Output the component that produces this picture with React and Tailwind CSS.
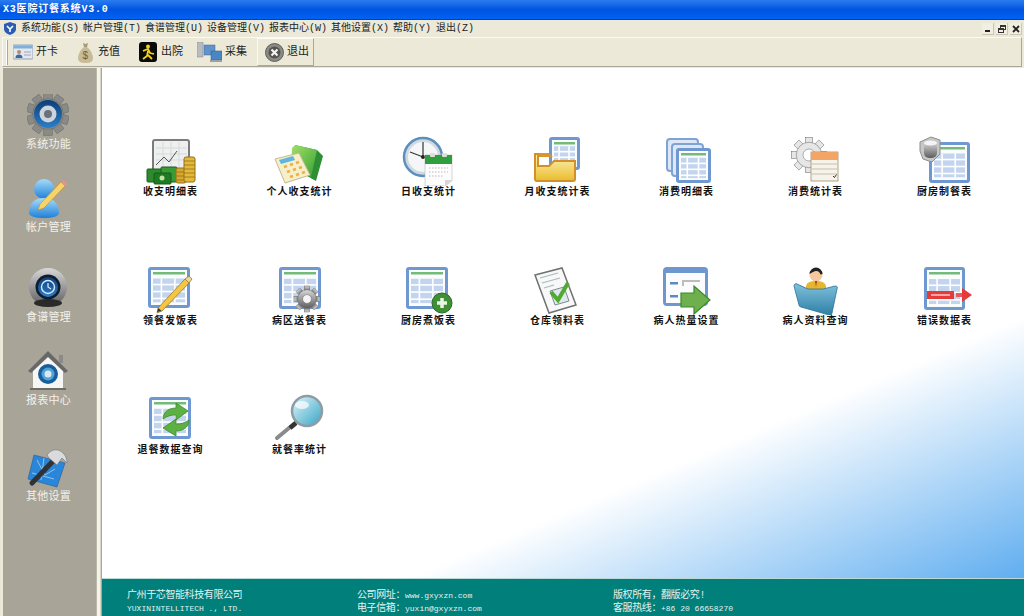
import React from "react";

const cjk = "font-['Liberation_Mono','Noto_Sans_CJK_SC',monospace]";

// shared gradients, referenced by id from the icons below
function Defs() {
  return (
    <svg className="absolute w-0 h-0">
      <defs>
        <linearGradient id="steel" x1="0" y1="0" x2="0" y2="1">
          <stop offset="0" stopColor="#d8d8d8" />
          <stop offset="1" stopColor="#5d5d5d" />
        </linearGradient>
        <linearGradient id="blueBall" x1="0" y1="0" x2="0" y2="1">
          <stop offset="0" stopColor="#a5dcfb" />
          <stop offset="1" stopColor="#1f80d8" />
        </linearGradient>
        <linearGradient id="navy" x1="0" y1="0" x2="0" y2="1">
          <stop offset="0" stopColor="#0d3d78" />
          <stop offset="1" stopColor="#2c7fc8" />
        </linearGradient>
        <linearGradient id="folderY" x1="0" y1="0" x2="0" y2="1">
          <stop offset="0" stopColor="#fff2b8" />
          <stop offset="1" stopColor="#e8bd2c" />
        </linearGradient>
        <linearGradient id="folderB" x1="0" y1="0" x2="0" y2="1">
          <stop offset="0" stopColor="#7fc1dc" />
          <stop offset="1" stopColor="#2f7fa6" />
        </linearGradient>
        <linearGradient id="greenF" x1="0" y1="0" x2="1" y2="1">
          <stop offset="0" stopColor="#a4e06a" />
          <stop offset="1" stopColor="#35a132" />
        </linearGradient>
        <linearGradient id="lens" x1="0" y1="0" x2="1" y2="1">
          <stop offset="0" stopColor="#e4f7fb" />
          <stop offset="1" stopColor="#34a4c4" />
        </linearGradient>
      </defs>
    </svg>
  );
}

// little table sheet that most of the report icons start from
function Sheet({ x = 7, y = 3, w = 38, h = 40 }) {
  const rows = [0.36, 0.53, 0.7];
  const cols = [0.3, 0.62];
  return (
    <g>
      <rect x={x} y={y} width={w} height={h} rx="3" fill="#6f98d0" />
      <rect x={x + 3} y={y + 3} width={w - 6} height={h - 6} fill="#fbfcfe" />
      <rect x={x + 5} y={y + 5} width={w - 10} height="2.5" fill="#74ba78" />
      <rect x={x + 5} y={y + h * 0.28} width={w - 10} height={h * 0.58} fill="#c3d5ee" />
      {rows.map((r) => (
        <rect key={r} x={x + 5} y={y + h * r + 2} width={w - 10} height="1.6" fill="#fff" />
      ))}
      {cols.map((c) => (
        <rect key={c} x={x + w * c} y={y + h * 0.28} width="1.6" height={h * 0.58} fill="#fff" />
      ))}
    </g>
  );
}

function Gear({ cx, cy, r, fill = "url(#steel)", hole = "#fff", teeth = 8 }) {
  const list = [];
  for (let i = 0; i < teeth; i++) list.push((i * 360) / teeth);
  return (
    <g>
      {list.map((a) => (
        <rect
          key={a}
          x={cx - r * 0.24}
          y={cy - r * 1.18}
          width={r * 0.48}
          height={r * 0.5}
          fill={fill}
          stroke="#666"
          strokeWidth="0.5"
          transform={`rotate(${a} ${cx} ${cy})`}
        />
      ))}
      <circle cx={cx} cy={cy} r={r * 0.85} fill={fill} stroke="#666" strokeWidth="0.5" />
      <circle cx={cx} cy={cy} r={r * 0.4} fill={hole} stroke="#666" strokeWidth="0.5" />
    </g>
  );
}

const Svg = ({ children, w = 56, h = 50 }) => (
  <svg width={w} height={h} viewBox={`0 0 ${w} ${h}`} className="block">
    {children}
  </svg>
);

/* ---------- main grid icons ---------- */
const icons = {
  money: (
    <Svg>
      <rect x="10" y="4" width="36" height="34" rx="2" fill="#eef0ef" stroke="#7c7c7c" strokeWidth="2" />
      <path d="M13 12h31M13 18h31M13 24h31M20 6v30M28 6v30M36 6v30" stroke="#d5d9d9" strokeWidth="1" />
      <path d="M13 29l8-8 5 5 8-11" stroke="#555" strokeWidth="1" fill="none" />
      <rect x="4" y="33" width="17" height="13" rx="1" fill="#2e8b2d" stroke="#1d5f1e" />
      <rect x="18" y="31" width="16" height="15" rx="1" fill="#3a9a35" stroke="#1d5f1e" />
      <rect x="11" y="37" width="17" height="11" rx="1" fill="#1f7a24" stroke="#175a1a" />
      <circle cx="19" cy="42" r="2.5" fill="#bfe3a0" />
      <rect x="33" y="32" width="10" height="15" rx="2" fill="#d6a92c" stroke="#94701a" />
      <rect x="41" y="21" width="11" height="25" rx="2" fill="#e2b93a" stroke="#94701a" />
      <path d="M41 25h11M41 29h11M41 33h11M41 37h11M41 41h11M33 36h8M33 40h8M33 44h8" stroke="#94701a" strokeWidth="0.8" />
    </Svg>
  ),
  calc: (
    <Svg>
      <path d="M23 9l22 5 6 6-7 25-9-5z" fill="#2c8f33" />
      <path d="M20 12l3-3 22 5-6 27-20-7z" fill="url(#greenF)" />
      <path d="M3 23l24-6 11 22-25 8z" fill="#f7eeca" stroke="#c4b98d" strokeWidth="1" />
      <path d="M7 24l14-4 2 4-14 4z" fill="#5fb8dc" />
      <path d="M12 31l3-1M18 29l3-1M24 27l3-1M15 36l3-1M21 34l3-1M27 32l3-1M18 41l3-1M24 39l3-1M30 37l3-1" stroke="#eab24a" strokeWidth="2.5" />
    </Svg>
  ),
  clock: (
    <Svg>
      <circle cx="22" cy="21" r="19" fill="#cfd9e2" stroke="#5d8fbd" strokeWidth="2.5" />
      <circle cx="22" cy="21" r="15" fill="#f4f6f8" />
      <path d="M22 6v15l-13-5M22 21l11 2" stroke="#333" strokeWidth="1.2" fill="none" />
      <circle cx="22" cy="21" r="2" fill="#222" />
      <path d="M24 19h27v26l-7 5H24z" fill="#fdfdfd" stroke="#bbb" strokeWidth="0.6" />
      <rect x="24" y="19" width="27" height="9" fill="#2f9e3d" />
      <rect x="29" y="17" width="5" height="4" rx="1" fill="#ddd" />
      <rect x="41" y="17" width="5" height="4" rx="1" fill="#ddd" />
      <path d="M28 32h19M28 36h19M28 40h15" stroke="#bbb" strokeWidth="1" strokeDasharray="1.5 1.5" />
      <path d="M44 50v-6h7z" fill="#d5d5d5" />
    </Svg>
  ),
  folderSheet: (
    <Svg>
      <Sheet x={19} y={1} w={31} h={33} />
      <path d="M5 17h14l4 4H5z" fill="#d9962e" />
      <path d="M5 18v25a2 2 0 002 2h36a2 2 0 002-2V25H24l-5 5H8V18z" fill="url(#folderY)" stroke="#d1902a" strokeWidth="2" />
    </Svg>
  ),
  stack: (
    <Svg>
      <rect x="8" y="3" width="31" height="32" rx="3" fill="#dde7f5" stroke="#7fa3d5" strokeWidth="2" />
      <rect x="13" y="8" width="31" height="32" rx="3" fill="#dde7f5" stroke="#7fa3d5" strokeWidth="2" />
      <Sheet x={17} y={12} w={35} h={35} />
    </Svg>
  ),
  gearList: (
    <Svg>
      <Gear cx={21} cy={19} r={15} fill="#e6e6e6" hole="#fff" />
      <rect x="23" y="16" width="27" height="29" fill="#f6f3ea" stroke="#a08d68" strokeWidth="0.8" />
      <rect x="23" y="16" width="27" height="8" fill="#f2a565" />
      <path d="M24 28h25M24 33h25M24 38h25" stroke="#c6bfae" strokeWidth="1" />
      <path d="M45 40l1.5 1.5 2-3" stroke="#333" strokeWidth="1" fill="none" />
    </Svg>
  ),
  dbSheet: (
    <Svg>
      <Sheet x={12} y={6} w={41} h={41} />
      <path d="M14 1l9 3v14l-8 8-9-3-3-8V6z" fill="#c7c7c7" stroke="#8d8d8d" strokeWidth="1" />
      <rect x="7" y="6" width="13" height="16" rx="5" fill="url(#steel)" />
      <ellipse cx="13.5" cy="7" rx="6.5" ry="2.5" fill="#f4f4f4" />
    </Svg>
  ),
  pencil: (
    <Svg>
      <Sheet x={5} y={2} w={42} h={41} />
      <path d="M15 43l-1 5 5-2 27-28-4-4z" fill="#f4c644" stroke="#9a7a1f" strokeWidth="0.8" />
      <path d="M42 14l4 4 3-4-3-3z" fill="#ecd9a0" stroke="#9a7a1f" strokeWidth="0.8" />
      <path d="M14 47l1.5-4 3 3z" fill="#333" />
    </Svg>
  ),
  sheetGear: (
    <Svg>
      <Sheet x={7} y={2} w={42} h={42} />
      <Gear cx={35} cy={34} r={11} hole="#f4f4f4" />
    </Svg>
  ),
  sheetPlus: (
    <Svg>
      <Sheet x={5} y={2} w={42} h={42} />
      <circle cx="41" cy="38" r="10" fill="#3f8f35" stroke="#2a6a24" />
      <path d="M41 33v10M36 38h10" stroke="#e9f6e2" strokeWidth="3.5" />
    </Svg>
  ),
  check: (
    <Svg>
      <path d="M5 10l27-7 14 37-27 8z" fill="#f7f8f7" stroke="#6e7272" strokeWidth="1.5" />
      <path d="M10 13l18-5M12 18l18-5M14 23l10-3" stroke="#a9b9c4" strokeWidth="1.2" />
      <path d="M20 26l14-4 5 14-14 4z" fill="#dfe8ec" stroke="#7d8a92" />
      <path d="M21 27l7 8 10-17" stroke="#4faa2f" strokeWidth="4" fill="none" />
    </Svg>
  ),
  arrowWin: (
    <Svg>
      <rect x="4" y="2" width="45" height="39" rx="4" fill="#6e97cf" />
      <rect x="7" y="8" width="39" height="30" fill="#fbfcfe" />
      <rect x="11" y="17" width="8" height="2.5" fill="#5c88c4" />
      <rect x="11" y="30" width="8" height="2.5" fill="#5c88c4" />
      <path d="M23 21v-6h18v2H25v4z" fill="#bdbdbd" />
      <path d="M22 28h13v-7l16 14-16 14v-7H22z" fill="#6eb04e" stroke="#3c8a2a" strokeWidth="1.2" />
    </Svg>
  ),
  person: (
    <Svg>
      <circle cx="28" cy="10" r="6.5" fill="#f6c8a0" />
      <path d="M21.5 9a6.500 6.500 0 0113 0l-2 .5c-1-3-3-4-5-3.500-2 .5-4 1.500-6 3z" fill="#222" />
      <path d="M18 21c1-4 5-5 10-5s9 1 10 5v8H18z" fill="#e8b62e" />
      <path d="M27 16l1 6 1-6z" fill="#9c3b1d" />
      <path d="M6 21c0-2 2-3 3-2l11 5h15l12-3c2 0 3 1 2 3l-5 24c0 2-2 2-3 2L13 42c-1 0-2-1-2-2z" fill="url(#folderB)" stroke="#2c7196" strokeWidth="0.8" />
    </Svg>
  ),
  errSheet: (
    <Svg>
      <Sheet x={7} y={2} w={41} h={43} />
      <rect x="10" y="26" width="27" height="8" fill="#e53a3a" />
      <rect x="14" y="29" width="19" height="2" fill="#f7a5a5" />
      <rect x="39" y="28" width="6" height="4" fill="#ea5a5a" />
      <path d="M45 23l10 7-10 7z" fill="#e53a3a" />
    </Svg>
  ),
  refund: (
    <Svg>
      <Sheet x={6} y={3} w={42} h={42} />
      <path d="M20 25c0-8 7-11 13-11V9l12 8-12 9v-5c-5 0-9 1-13 4z" fill="#5cb044" stroke="#3c8a2a" strokeWidth="0.8" />
      <path d="M46 26c0 8-7 11-13 11v5l-13-8 13-9v5c5 0 9-1 13-4z" fill="#5cb044" stroke="#3c8a2a" strokeWidth="0.8" />
    </Svg>
  ),
  magnifier: (
    <Svg>
      <path d="M23 29L5 44" stroke="#8a8a8a" strokeWidth="4" strokeLinecap="round" />
      <path d="M24 29l-6 5" stroke="#333" strokeWidth="4.500" />
      <circle cx="35" cy="17" r="15" fill="url(#lens)" stroke="#8f9ca3" strokeWidth="2.500" />
      <ellipse cx="30" cy="11" rx="7" ry="4" fill="#fff" opacity="0.7" />
    </Svg>
  ),
};

const grid = [
  ["收支明细表", "money"],
  ["个人收支统计", "calc"],
  ["日收支统计", "clock"],
  ["月收支统计表", "folderSheet"],
  ["消费明细表", "stack"],
  ["消费统计表", "gearList"],
  ["厨房制餐表", "dbSheet"],
  ["领餐发饭表", "pencil"],
  ["病区送餐表", "sheetGear"],
  ["厨房煮饭表", "sheetPlus"],
  ["仓库领料表", "check"],
  ["病人热量设置", "arrowWin"],
  ["病人资料查询", "person"],
  ["错误数据表", "errSheet"],
  ["退餐数据查询", "refund"],
  ["就餐率统计", "magnifier"],
];

/* ---------- sidebar icons ---------- */
const sideItems = [
  {
    label: "系统功能",
    mt: "mt-[26px]",
    icon: (
      <svg width="42" height="42" viewBox="0 0 42 42" className="block">
        <Gear cx={21} cy={20} r={18} fill="#8a8a86" hole="#a8c0d8" teeth={10} />
        <circle cx="21" cy="20" r="14" fill="url(#navy)" />
        <circle cx="21" cy="20" r="8.500" fill="#c9d4dc" />
        <circle cx="21" cy="20" r="4" fill="#6b7178" />
      </svg>
    ),
  },
  {
    label: "帐户管理",
    mt: "mt-[25px]",
    icon: (
      <svg width="42" height="42" viewBox="0 0 42 42" className="block">
        <circle cx="17" cy="12" r="10" fill="url(#blueBall)" />
        <path d="M2 36c0-11 7-15 15-15s15 4 15 15c0 3-6 5-15 5S2 39 2 36z" fill="url(#blueBall)" />
        <path d="M11 33l2-6 21-22 4 4-21 22z" fill="#f7d36a" stroke="#b98f2c" strokeWidth="0.6" />
        <path d="M34 5l4 4 2-2-3-4z" fill="#e88f96" />
      </svg>
    ),
  },
  {
    label: "食谱管理",
    mt: "mt-[32px]",
    icon: (
      <svg width="42" height="42" viewBox="0 0 42 42" className="block">
        <circle cx="21" cy="20" r="19" fill="url(#steel)" />
        <ellipse cx="21" cy="36" rx="14" ry="4" fill="#2a2a2a" />
        <circle cx="21" cy="20" r="12.500" fill="#101c2e" />
        <circle cx="21" cy="20" r="10" fill="url(#navy)" />
        <circle cx="21" cy="20" r="6.500" fill="none" stroke="#d8e8f6" strokeWidth="1.400" />
        <path d="M21 16v4l3 2" stroke="#d8e8f6" strokeWidth="1.300" fill="none" />
      </svg>
    ),
  },
  {
    label: "报表中心",
    mt: "mt-[25px]",
    icon: (
      <svg width="42" height="42" viewBox="0 0 42 42" className="block">
        <path d="M6 19L21 5l15 14v20H6z" fill="#f6f6f4" />
        <path d="M1 21L21 1l20 20-3 2L21 7 4 23z" fill="#686868" />
        <rect x="32" y="5" width="4" height="8" fill="#8a8a8a" />
        <circle cx="21" cy="24" r="10" fill="#1a5d99" />
        <circle cx="21" cy="24" r="6.500" fill="#4ca4dc" />
        <circle cx="21" cy="24" r="3.500" fill="#dfe6ec" />
        <rect x="3" y="38" width="36" height="2" fill="#6f6c64" />
      </svg>
    ),
  },
  {
    label: "其他设置",
    mt: "mt-[38px]",
    icon: (
      <svg width="42" height="42" viewBox="0 0 42 42" className="block">
        <path d="M7 9l31 8-8 24L1 33z" fill="#2a86d8" stroke="#1c5f9f" strokeWidth="0.6" />
        <path d="M10 14l8 15 10-6M5 27l22 6M17 12l-3 22" stroke="#a9d3f3" strokeWidth="0.8" fill="none" />
        <path d="M5 37L28 13" stroke="#2f3236" strokeWidth="5" strokeLinecap="round" />
        <path d="M20 9c4-6 11-7 16-2 3 3 4 6 4 10l-5-5-5 7-8-7z" fill="#d8dadc" stroke="#6f7276" strokeWidth="0.6" />
      </svg>
    ),
  },
];

/* ---------- toolbar ---------- */
const tools = [
  {
    label: "开卡",
    w: "w-[20px]",
    ml: "ml-[5px]",
    icon: (
      <svg width="20" height="16" viewBox="0 0 20 16" className="block">
        <rect x="0" y="1" width="20" height="14" rx="1" fill="#e4e8ee" stroke="#8fa3bd" />
        <rect x="0.5" y="1.5" width="19" height="3" fill="#7fb0dc" />
        <circle cx="6" cy="8" r="2" fill="#b98b64" />
        <path d="M2.500 14c0-3 2-3.500 3.500-3.500s3.500.5 3.500 3.500z" fill="#3e6a9c" />
        <path d="M11 8h7M11 11h7" stroke="#9aa8b8" />
      </svg>
    ),
  },
  {
    label: "充值",
    w: "w-[17px]",
    ml: "ml-[20px]",
    icon: (
      <svg width="15" height="21" viewBox="0 0 15 21" className="block">
        <path d="M5 1l2.500 1L10 1 9 5H6z" fill="#a79a74" />
        <path d="M6 5h3c4 3 6 8 6 11 0 3-2 5-7.500 5S0 19 0 16c0-3 2-8 6-11z" fill="#c8bb95" />
        <text x="4.500" y="17" fontSize="10" fontFamily="Liberation Sans" fill="#6f6140">$</text>
      </svg>
    ),
  },
  {
    label: "出院",
    w: "w-[20px]",
    ml: "ml-[18px]",
    icon: (
      <svg width="20" height="20" viewBox="0 0 20 20" className="block">
        <rect x="1" y="0" width="18" height="20" rx="3" fill="#0a0a0a" />
        <circle cx="10" cy="4.500" r="2" fill="#f2d21e" />
        <path d="M5 9l5-2 2 4 4 1M10 9l-1 5-4 3M10 13l4 4" stroke="#f2d21e" strokeWidth="1.800" fill="none" />
      </svg>
    ),
  },
  {
    label: "采集",
    w: "w-[25px]",
    ml: "ml-[14px]",
    icon: (
      <svg width="25" height="20" viewBox="0 0 25 20" className="block">
        <rect x="0" y="0" width="6" height="15" fill="#b8bcc2" stroke="#7d8288" strokeWidth="0.5" />
        <rect x="7" y="3" width="11" height="10" fill="#5f93c9" stroke="#3c6a9c" strokeWidth="0.5" />
        <rect x="14" y="9" width="11" height="9" fill="#4a86c4" stroke="#2f5f94" strokeWidth="0.5" />
        <rect x="13" y="18" width="12" height="2" fill="#9aa0a6" />
      </svg>
    ),
  },
];

function MenuBtn({ children }) {
  return (
    <div className="w-[12px] h-[12px] flex items-center justify-center border-b border-r border-[#c9c6b8] bg-[#f1eee2]">
      {children}
    </div>
  );
}

export default function App() {
  return (
    <div className={`w-[1024px] h-[616px] overflow-hidden flex flex-col bg-[#ece9d8] ${cjk}`}>
      <Defs />

      {/* title bar */}
      <div className="h-[20px] flex items-center pl-[3px] bg-gradient-to-b from-[#2a7df0] via-[#0054e0] to-[#0162f4] border-b border-[#0a3fa8] text-white font-bold text-[10px] tracking-[0.8px]">
        X3医院订餐系统V3.0
      </div>

      {/* menu bar */}
      <div className="h-[16px] flex items-center text-[10px] text-[#222] bg-[#ece9d8]">
        <svg width="12" height="13" viewBox="0 0 12 13" className="ml-[4px] mr-[5px] shrink-0">
          <path d="M6 0l6 2v5c0 3-3 5-6 6-3-1-6-3-6-6V2z" fill="#2b5db4" />
          <path d="M3 4l3 3 3-3M6 7v3" stroke="#fff" strokeWidth="1.600" fill="none" />
        </svg>
        <div className="flex gap-[10px]">
          {["系统功能(S)", "帐户管理(T)", "食谱管理(U)", "设备管理(V)", "报表中心(W)", "其他设置(X)"].map((m) => (
            <span key={m} className="w-[52px] whitespace-nowrap">{m}</span>
          ))}
          <span className="w-[33px] whitespace-nowrap">帮助(Y)</span>
          <span className="whitespace-nowrap">退出(Z)</span>
        </div>
        <div className="ml-auto mr-[2px] flex gap-[2px] mt-[2px]">
          <MenuBtn>
            <div className="w-[5px] h-[2px] bg-[#222] mt-[5px]" />
          </MenuBtn>
          <MenuBtn>
            <div className="relative w-[8px] h-[8px]">
              <div className="absolute right-0 top-0 w-[6px] h-[5px] border border-t-2 border-[#333]" />
              <div className="absolute left-0 bottom-0 w-[6px] h-[5px] border border-t-2 border-[#333] bg-[#f1eee2]" />
            </div>
          </MenuBtn>
          <MenuBtn>
            <svg width="8" height="8" viewBox="0 0 8 8">
              <path d="M1 1l6 6M7 1L1 7" stroke="#222" strokeWidth="1.800" />
            </svg>
          </MenuBtn>
        </div>
      </div>

      {/* toolbar */}
      <div className="h-[30px] ml-[2px] mr-[2px] mt-[1px] flex items-center border border-[#fbfaf4] border-b-[#aca899] border-r-[#aca899] text-[11px] text-[#222]">
        <div className="w-[2px] h-[25px] ml-[3px] bg-[#fff] border-r border-[#aca899]" />
        {tools.map((t) => (
          <div key={t.label} className={`flex items-center ${t.ml}`}>
            <div className={t.w}>{t.icon}</div>
            <span className="ml-[3px] w-[22px] whitespace-nowrap">{t.label}</span>
          </div>
        ))}
        <div className="ml-[10px] w-[57px] h-[28px] pl-[7px] flex items-center bg-[#ece9d8] border border-[#fbfaf4] border-b-[#aca899] border-r-[#aca899]">
          <svg width="19" height="19" viewBox="0 0 19 19" className="block">
            <circle cx="9.500" cy="9.500" r="9" fill="#8b8b85" stroke="#5f5f5a" />
            <circle cx="9.500" cy="9.500" r="6" fill="#55554f" />
            <path d="M6.500 6.500l6 6M12.500 6.500l-6 6" stroke="#f4f4f0" strokeWidth="2.200" />
          </svg>
          <span className="ml-[3px] whitespace-nowrap">退出</span>
        </div>
      </div>

      {/* body */}
      <div className="flex-1 flex min-h-0 mt-[1px]">
        {/* sidebar */}
        <div className="w-[96px] border-l-[3px] border-[#ece9d8] bg-[#a8a498] flex flex-col items-center text-[11px] text-[#f3f1ea] pr-[2px]">
          {sideItems.map((s) => (
            <div key={s.label} className={`flex flex-col items-center ${s.mt}`}>
              {s.icon}
              <span className="mt-[2px] leading-[14px] tracking-[0.3px] whitespace-nowrap">{s.label}</span>
            </div>
          ))}
        </div>

        {/* splitter */}
        <div className="w-[6px] flex">
          <div className="w-[1px] bg-[#bdb9aa]" />
          <div className="w-[3px] bg-[#f5f3e8]" />
          <div className="w-[1px] bg-[#d8d5c6]" />
          <div className="w-[1px] bg-[#aca899]" />
        </div>

        {/* content */}
        <div className="flex-1 flex flex-col bg-white overflow-hidden">
          <div className="flex-1 pl-[4px] pt-[68px] grid grid-cols-[repeat(7,129px)] auto-rows-[129px] text-[10px] font-bold text-[#111] tracking-[1px] bg-[linear-gradient(157deg,#fff_71%,#60aef0_100%)]">
            {grid.map(([label, key]) => (
              <div key={label} className="flex flex-col items-center">
                {icons[key]}
                <span className="mt-[1px] leading-[12px] whitespace-nowrap">{label}</span>
              </div>
            ))}
          </div>

          {/* footer */}
          <div className="h-[38px] shrink-0 bg-[#007f7b] border-t border-[#b9d9d6] pl-[25px] pt-[10px] flex text-[10px] leading-[13px] text-[#e4f2ef] tracking-[-0.4px]">
            <div className="w-[230px]">
              <div>广州于芯智能科技有限公司</div>
              <div className="text-[8px] tracking-normal">YUXININTELLITECH ., LTD.</div>
            </div>
            <div className="w-[256px]">
              <div>公司网址：<span className="text-[8px] tracking-normal">www.gxyxzn.com</span></div>
              <div>电子信箱：<span className="text-[8px] tracking-normal">yuxin@gxyxzn.com</span></div>
            </div>
            <div>
              <div>版权所有，翻版必究!</div>
              <div>客服热线：<span className="text-[8px] tracking-normal">+86 20 66658270</span></div>
            </div>
          </div>
        </div>
      </div>
    </div>
  );
}
